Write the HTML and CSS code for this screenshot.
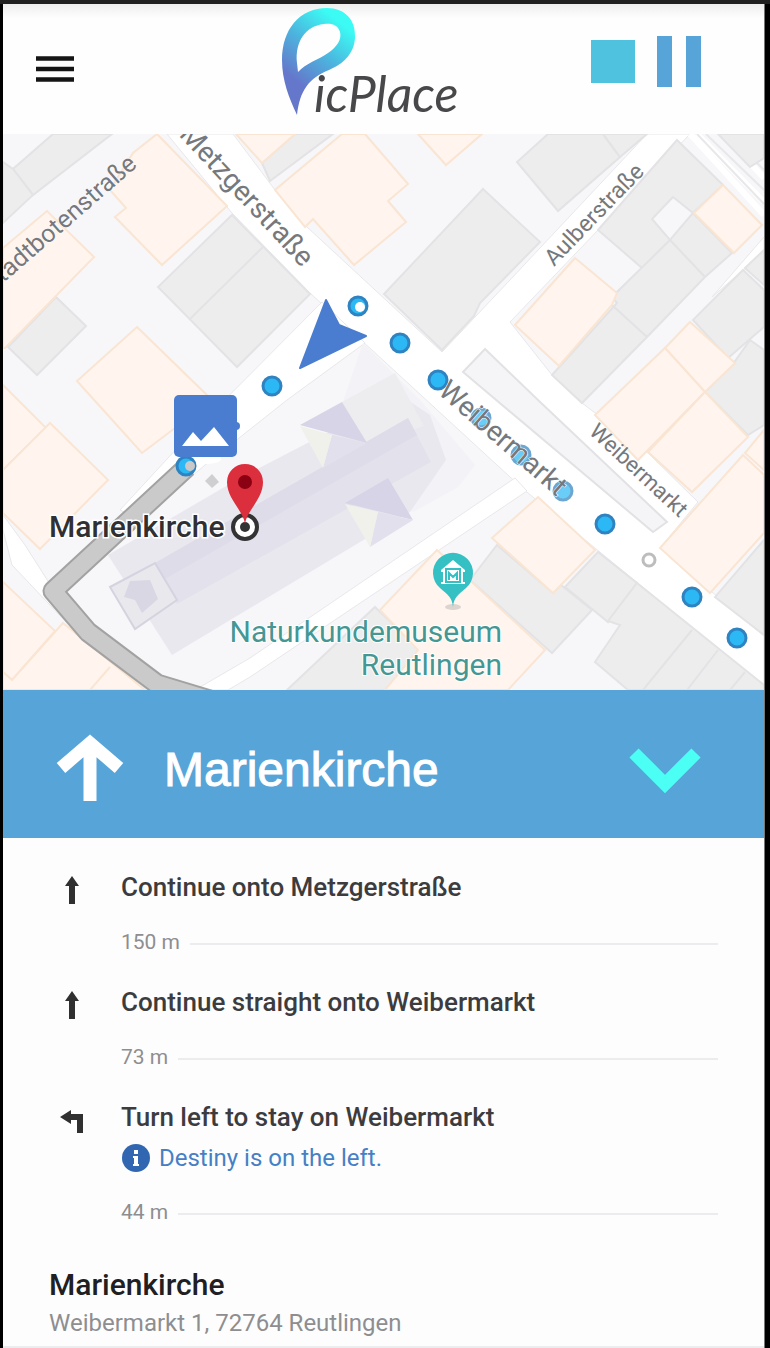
FILE: index.html
```html
<!DOCTYPE html>
<html lang="en">
<head>
<meta charset="utf-8">
<meta name="viewport" content="width=device-width, initial-scale=1">
<title>PicPlace</title>
<link rel="stylesheet" href="styles.css">
</head>
<body>
<div class="app">
  <header class="header">
    <button class="icon-button menu" type="button" aria-label="Menu">
      <svg width="40" height="28" viewBox="0 0 40 28"><path d="M1 3.500h38M1 14h38M1 24.500h38" stroke="#151515" stroke-width="4.500"/></svg>
    </button>
    <svg class="logo" width="180" height="124" viewBox="281 4 180 124" role="img" aria-label="PicPlace">
      <defs>
        <linearGradient id="mark" gradientUnits="userSpaceOnUse" x1="342" y1="22" x2="297" y2="80">
          <stop offset="0" stop-color="#3cfbf4"/><stop offset=".5" stop-color="#4cb4de"/><stop offset="1" stop-color="#6577cb"/>
        </linearGradient>
      </defs>
      <path fill="url(#mark)" fill-rule="evenodd" d="M299 115C291 98 284 80 284 60C284 30 301 8 329 8C347 8 358 20 357 38C356 54 345 64 331 70C311 78 302 90 299 115ZM300 72C308 63 320 60 330 53C339 47 344 39 342 32C340 25 334 23 326 24C307 26 297 42 299 63Z"/>
      <text class="wordmark" x="316" y="112">icPlace</text>
    </svg>
    <div class="controls">
      <button class="icon-button" type="button" aria-label="Stop">
        <svg width="46" height="46" viewBox="0 0 46 46"><path fill="#4fc2e0" d="M0 1h44v43H0z"/></svg>
      </button>
      <button class="icon-button" type="button" aria-label="Pause">
        <svg width="46" height="52" viewBox="0 0 46 52"><path fill="#57a5d8" d="M0 0h15v51H0zM29 0h15v51H29z"/></svg>
      </button>
    </div>
  </header>

  <main>
    <svg class="map" viewBox="3 134 761 556" preserveAspectRatio="xMidYMid slice" role="img" aria-label="Map around Marienkirche">
      <g class="road">
        <path d="M167 134H233L275 190L307 227L442 352L510 280L647 134H690L510 322L552 375L582 403L648 453L698 502L660 548L764 636V687L522 488L310 293L232 213Z"/>
        <path d="M322 302L365 343L287 400L205 465L140 520L120 510L180 445Z"/>
        <path d="M515 478L250 658L195 690H228L250 677L527 491Z"/>
        <path d="M3 530L12 565L66 622L100 650L60 600L25 545L3 515Z"/>
        <path d="M764 237V252L712 297Z"/>
      </g>
      <path class="lane" d="M697 134L764 202M723 134L764 178M690 134L764 215"/>
      <path class="kerb" d="M697 134L764 204M706 134L764 190M729 134L764 170"/>
      <path class="strip" d="M485 349L463 372L653 532L667 522L538 400Z"/>

      <g class="block">
        <path d="M53 134H112L33 195L13 169Z"/>
        <path d="M3 162L13 169L33 195L3 223Z"/>
        <path d="M56 297L86 326L37 375L8 347Z"/>
        <path d="M232 215L310 294L237 367L158 287ZM190 319L263 247"/>
        <path d="M262 163L270 181L333 134H295Z"/>
        <path d="M548 134L517 162L558 211L620 157L603 134Z"/>
        <path d="M603 134H647L620 157Z"/>
        <path d="M483 189L540 242L480 303L474 316L442 350L384 294Z"/>
        <path fill-rule="evenodd" d="M677 140L723 185L693 213L732 253L705 277L647 337L582 403L552 375L617 303L612 297L642 268L598 230ZM673 197L652 219L670 240L693 213Z"/>
        <path d="M612 297L670 240L705 277M612 305L647 337"/>
        <path d="M718 134H764V158L750 167Z"/>
        <path d="M764 250L745 268L764 285Z"/>
        <path d="M743 270L764 290V327L728 358L693 320Z"/>
        <path d="M750 340L764 350V425L748 435L705 392L733 364Z"/>
        <path d="M764 540L715 597L764 635Z"/>
        <path d="M598 552L637 583L608 622L565 587Z"/>
        <path d="M497 545L553 593L561 585L592 610L552 653L470 580Z"/>
        <path d="M375 607L420 650L385 690H287Z"/>
        <path d="M637 583L764 685V690H628L595 662L620 625L608 621ZM692 630L643 690M718 650L687 690M745 672L730 690"/>
      </g>
      <g class="building">
        <path d="M157 134L227 206L162 265L115 217L126 208L110 190L133 153Z"/>
        <path d="M3 248L47 211L94 257L5 348H3Z"/>
        <path d="M137 327L212 400L142 453L77 381Z"/>
        <path d="M3 385L46 428L3 470Z"/>
        <path d="M50 423L108 480L40 549L3 513V470Z"/>
        <path d="M3 582L55 631L12 680L3 672Z"/>
        <path d="M63 623L145 690H3V672L12 680ZM110 667L90 690"/>
        <path d="M236 134L262 163L295 134Z"/>
        <path d="M342 134L275 190L305 227L313 219L354 265L406 222L388 201L408 184L365 134Z"/>
        <path d="M418 134L446 165L482 134Z"/>
        <path d="M723 185L762 225L734 253L694 213Z"/>
        <path d="M575 258L617 293L612 305L559 366L515 325Z"/>
        <path d="M690 322L735 363L705 392L665 348Z"/>
        <path d="M665 348L705 392L638 460L595 415Z"/>
        <path d="M705 392L748 437L692 492L648 452Z"/>
        <path d="M743 455L764 475V533L710 593L660 548Z"/>
        <path d="M764 430L745 453L764 470Z"/>
        <path d="M538 497L595 550L553 593L492 538Z"/>
        <path d="M437 550L545 650L508 690H385L418 650L380 610Z"/>
      </g>

      <g>
        <path fill="#f3f2f6" d="M363 343L420 400L475 465L458 487L413 512L330 440Z"/>
        <path fill="#e9e8ef" d="M108 555L240 478L400 395L430 415L446 460L410 512L172 655Z"/>
        <path fill="#ededef" d="M342 402L395 373L424 426L367 443Z"/>
        <path fill="#e3e1eb" d="M155 563L408 418L431 462L177 604Z"/>
        <path fill="#dedce9" d="M155 563L408 418L417 435L165 579Z"/>
        <path fill="#d6d4e6" d="M342 402L300 425L367 443ZM388 478L345 503L413 520Z"/>
        <path fill="#e2e0ec" d="M332 435L367 443L323 468ZM378 512L413 520L370 547Z"/>
        <path fill="#f1f1eb" d="M300 426L332 435L323 468ZM345 504L378 512L370 547Z"/>
        <path fill="#e9e8ed" stroke="#d5d3df" stroke-width="2" d="M110 587L155 563L177 600L135 629Z"/>
        <path fill="#d9d7e4" d="M130 581L150 580L158 599L142 613L135 600L124 597Z"/>
        <path fill="#cfcfd1" d="M212 474L219 482L212 488L205 481Z"/>
      </g>

      <path class="path-edge" d="M187 467L53 591L88 632L157 684L210 700"/>
      <path class="path-fill" d="M187 467L53 591L88 632L157 684L210 700"/>

      <g class="dot">
        <circle cx="358" cy="306" r="9"/><circle cx="400" cy="343" r="9"/><circle cx="438" cy="380" r="9"/>
        <circle cx="605" cy="524" r="9"/><circle cx="692" cy="597" r="9"/><circle cx="737" cy="638" r="9"/>
        <circle cx="272" cy="386" r="9"/><circle cx="186" cy="466" r="9"/>
      </g>
      <g class="dot faded">
        <circle cx="481" cy="418" r="9"/><circle cx="521" cy="455" r="9"/><circle cx="563" cy="491" r="9"/>
      </g>
      <circle cx="360" cy="307" r="5" fill="#fff"/>
      <circle cx="190" cy="466" r="5" fill="#c9c9c9"/>
      <circle cx="649" cy="560" r="6" fill="#fff" stroke="#bdbdbd" stroke-width="3"/>

      <g class="street">
        <text font-size="25" text-anchor="end" transform="translate(138 166) rotate(-41)">Stadtbotenstraße</text>
        <text font-size="28" text-anchor="end" transform="translate(302 268) rotate(47)">Metzgerstraße</text>
        <text font-size="23" transform="translate(554 267) rotate(-46)">Aulberstraße</text>
        <text font-size="28" transform="translate(437 393) rotate(41)">Weibermarkt</text>
        <text font-size="22" transform="translate(588 433) rotate(43)">Weibermarkt</text>
      </g>

      <path fill="#4a7dd0" stroke="#4a7dd0" stroke-width="2" stroke-linejoin="round" d="M326 300L339 325L366 336L300 368Z"/>
      <ellipse cx="208" cy="459" rx="13" ry="5" fill="#fff"/>
      <rect x="174" y="395" width="63" height="62" rx="5" fill="#4a7dd0"/>
      <circle cx="236" cy="426" r="4" fill="#4a7dd0"/>
      <path fill="#fff" d="M182 446L193 432L201 441L214 427L229 446Z"/>

      <text class="place" x="49" y="537">Marienkirche</text>
      <circle cx="245" cy="527" r="12" fill="#fff" stroke="#333" stroke-width="4"/>
      <circle cx="245" cy="527" r="5" fill="#333"/>
      <path fill="#dc2f3e" d="M245 524C243 510 227 499 227 482A18 18 0 0 1 263 482C263 499 247 510 245 524Z"/>
      <circle cx="245" cy="482" r="7" fill="#8b0012"/>

      <ellipse cx="453" cy="607" rx="8" ry="3" fill="#dcd5cf"/>
      <path fill="#35c0c4" d="M453 607C452 597 448 595 440 588A20 20 0 1 1 466 588C458 595 454 597 453 607Z"/>
      <path fill="#fff" d="M441 570L453 560L465 570V572H463V582H465V584H441V582H443V572H441Z"/>
      <path fill="none" stroke="#35c0c4" stroke-width="2" d="M446 569H460V582H446ZM449 580V573L453 577L457 573V580"/>
      <g class="museum">
        <text x="502" y="642">Naturkundemuseum</text>
        <text x="502" y="675">Reutlingen</text>
      </g>
    </svg>

    <section class="banner">
      <svg width="68" height="68" viewBox="0 0 68 68" aria-hidden="true"><path fill="none" stroke="#fff" stroke-width="13" d="M34 67V10M5 34L34 9L63 34"/></svg>
      <h1 class="banner-title">Marienkirche</h1>
      <button class="icon-button collapse" type="button" aria-label="Collapse directions">
        <svg width="72" height="46" viewBox="0 0 72 46"><path fill="none" stroke="#4bfff5" stroke-width="13" d="M5 5L36 36L67 5"/></svg>
      </button>
    </section>

    <ol class="steps">
      <li class="step">
        <svg class="turn" width="28" height="28" viewBox="0 0 28 28" aria-hidden="true"><path fill="#303030" d="M14 0L21 10H17V28H11V10H7Z"/></svg>
        <p class="step-title">Continue onto Metzgerstraße</p>
        <p class="distance">150 m</p>
      </li>
      <li class="step">
        <svg class="turn" width="28" height="28" viewBox="0 0 28 28" aria-hidden="true"><path fill="#303030" d="M14 0L21 10H17V28H11V10H7Z"/></svg>
        <p class="step-title">Continue straight onto Weibermarkt</p>
        <p class="distance">73 m</p>
      </li>
      <li class="step">
        <svg class="turn" width="28" height="28" viewBox="0 0 28 28" aria-hidden="true"><path fill="#303030" d="M2 11L13 4V8H25V27H19V14H13V18Z"/></svg>
        <p class="step-title">Turn left to stay on Weibermarkt</p>
        <p class="note">
          <svg width="30" height="30" viewBox="0 0 30 30" aria-hidden="true"><circle cx="15" cy="15" r="14" fill="#3067b0"/><path fill="#fff" d="M13 7h4v4h-4zM12 13h5v8h1v2h-6v-2h1v-6h-1z"/></svg>
          Destiny is on the left.
        </p>
        <p class="distance">44 m</p>
      </li>
    </ol>

    <section class="destination">
      <h2 class="destination-name">Marienkirche</h2>
      <p class="address">Weibermarkt 1, 72764 Reutlingen</p>
    </section>
  </main>
</div>
</body>
</html>
```
FILE: styles.css
```css
* {
  box-sizing: border-box;
}

body {
  margin: 0;
  padding: 0 5px 0 3px;
  border-top: 4px solid #202020;
  background: #000;
  font-family: Roboto, "Open Sans", sans-serif;
}

p,
h1,
h2,
ol {
  margin: 0;
  padding: 0;
}

.app {
  min-height: calc(100vh - 4px);
  background: #fdfdfe;
  border-right: 1px solid #777;
}

.icon-button {
  display: flex;
  padding: 0;
  border: 0;
  background: none;
  cursor: pointer;
}

.header {
  display: grid;
  grid-template-columns: 1fr auto 1fr;
  align-items: center;
  height: 130px;
  padding: 0 61px 0 32px;
  background: linear-gradient(#eeeeee, #fefefe 14px);
}

.logo {
  align-self: start;
}

.menu {
  justify-self: start;
}

.wordmark {
  font-family: Lato, sans-serif;
  font-style: italic;
  font-size: 50px;
  fill: #48484a;
}

.controls {
  display: flex;
  justify-self: end;
  align-items: center;
  gap: 20px;
  margin-bottom: 14px;
}

.map {
  display: block;
  width: 100%;
  aspect-ratio: 761 / 556;
  background: #f7f6f9;
}

.road {
  fill: #fff;
  stroke: #e8e7ea;
  stroke-width: 1;
}

.lane {
  fill: none;
  stroke: #fff;
  stroke-width: 6;
}

.kerb {
  fill: none;
  stroke: #e8e7ea;
  stroke-width: 2;
}

.strip {
  fill: #f5f4f7;
  stroke: #e2e2e4;
  stroke-width: 2;
}

.block {
  fill: #ededee;
  stroke: #e3e3e5;
  stroke-width: 2;
}

.building {
  fill: #fff5ee;
  stroke: #fae5d3;
  stroke-width: 2;
}

.path-edge,
.path-fill {
  fill: none;
  stroke: #a2a2a2;
  stroke-width: 21;
  stroke-linejoin: round;
}

.path-fill {
  stroke: #cacaca;
  stroke-width: 17;
}

.dot {
  fill: #2cb8f5;
  stroke: #2f83c0;
  stroke-width: 3;
}

.faded {
  opacity: 0.7;
}

.street {
  fill: #75787c;
  stroke: #fff;
  stroke-width: 1;
  paint-order: stroke;
}

.place {
  font-size: 30px;
  font-weight: 500;
  fill: #303032;
  stroke: #fff;
  stroke-width: 3;
  paint-order: stroke;
}

.museum {
  font-size: 30px;
  fill: #459793;
  stroke: #fff;
  stroke-width: 2;
  paint-order: stroke;
  text-anchor: end;
}

.banner {
  display: flex;
  align-items: center;
  height: 148px;
  padding: 8px 63px 0 53px;
  background: #57a5d8;
}

.banner-title {
  flex: 1;
  padding: 4px 0 0 40px;
  font: 400 48px/56px "Liberation Sans", Arial, sans-serif;
  -webkit-text-stroke: 1px #fff;
  color: #fff;
}

.collapse {
  margin-top: 6px;
}

.steps {
  display: grid;
  gap: 30px;
  padding: 33px 46px 0 55px;
  list-style: none;
}

.step {
  display: grid;
  grid-template-columns: 63px 1fr;
}

.turn {
  margin-top: 5px;
}

.step > p {
  grid-column: 2;
}

.step-title {
  font-size: 26px;
  font-weight: 500;
  line-height: 32px;
  color: #3c3c3e;
}

.distance {
  display: flex;
  align-items: center;
  gap: 10px;
  margin-top: 24px;
  font-size: 21px;
  line-height: 28px;
  color: #8e8e90;
}

.distance::after {
  content: "";
  flex: 1;
  height: 2px;
  margin-top: 4px;
  background: #ececee;
}

.note {
  display: flex;
  align-items: center;
  gap: 8px;
  margin-top: 8px;
  font-size: 24px;
  line-height: 32px;
  color: #4680c4;
}

.destination {
  padding: 41px 46px 7px;
  border-bottom: 2px solid #ececee;
}

.destination-name {
  font-size: 30px;
  font-weight: 500;
  line-height: 36px;
  color: #202022;
}

.address {
  margin-top: 4px;
  font-size: 24px;
  line-height: 32px;
  color: #8e8e90;
}
```
